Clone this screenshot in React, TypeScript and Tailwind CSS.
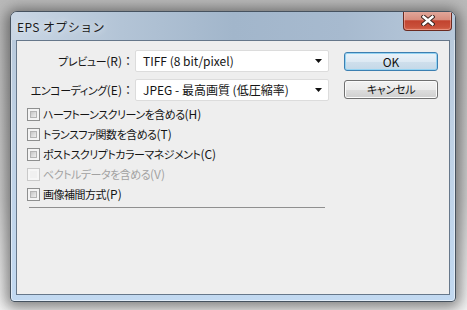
import React from "react";

type Opt = { label: string; key: string; disabled?: boolean };

const options: Opt[] = [
  { label: "ハーフトーンスクリーンを含める", key: "(H)" },
  { label: "トランスファ関数を含める", key: "(T)" },
  { label: "ポストスクリプトカラーマネジメント", key: "(C)" },
  { label: "ベクトルデータを含める", key: "(V)", disabled: true },
  { label: "画像補間方式", key: "(P)" },
];

function Arrow() {
  return (
    <svg width="7" height="4" viewBox="0 0 7 4" className="shrink-0">
      <path d="M0 0h7L3.5 4z" fill="#111" />
    </svg>
  );
}

function Select({ value }: { value: string }) {
  return (
    <div className="flex h-[22px] w-[194px] items-center justify-between rounded-[2px] border border-[#dcdcdc] bg-white pl-[7px] pr-[6px]">
      <span className="whitespace-nowrap">{value}</span>
      <Arrow />
    </div>
  );
}

function CheckBox({ disabled }: { disabled?: boolean }) {
  return (
    <div
      className={
        disabled
          ? "h-[13px] w-[13px] shrink-0 border border-[#c9c9c9] bg-[#f6f6f6] p-[2px]"
          : "h-[13px] w-[13px] shrink-0 border border-[#8e8f8f] bg-[#f4f4f4] p-[2px]"
      }
    >
      <div
        className={
          disabled
            ? "h-full w-full bg-[#f0f0f0]"
            : "h-full w-full border border-[#b4b4b4] bg-[linear-gradient(135deg,#c6c6c6,#eeeeee)]"
        }
      />
    </div>
  );
}

function Label({ text, k }: { text: string; k: string }) {
  return (
    <div className="flex items-center justify-end whitespace-nowrap pr-[1px]">
      <span className="text-[11px] tracking-[-0.4px]">{text}</span>
      <span>{k}</span>
      <span className="[font-feature-settings:normal]">：</span>
    </div>
  );
}

export default function App() {
  return (
    <div className="h-[310px] w-[467px] overflow-hidden bg-[linear-gradient(180deg,#b9b9b9,#cfcfcf_65%,#f3f3f3)] pl-[10px] pt-[11px] font-['Noto_Sans_CJK_JP','Noto_Sans',sans-serif] text-[12px] leading-none text-[#141414] [font-feature-settings:'palt'_1]">
      <div className="flex h-[291px] w-[446px] flex-col overflow-hidden rounded-t-[7px] rounded-b-[4px] border border-[#46525f] bg-[linear-gradient(180deg,#b7c8da,#bfd1e4_40%,#c2d9f1)] shadow-[0_2px_14px_4px_rgba(0,0,0,0.45),inset_0_0_0_1px_rgba(255,255,255,0.5)]">
        {/* title bar */}
        <div className="flex h-[28px] shrink-0 bg-[linear-gradient(90deg,#cad7e5_0%,#b3c4d6_25%,#a2b6cb_50%,#a7bacf_75%,#b8c9db_100%)]">
          <span className="self-center pl-[6px] pt-[2px] text-[12px] tracking-[0.4px] text-[#1b1b1b] [font-feature-settings:normal] [text-shadow:0_0_6px_rgba(255,255,255,0.9)]">
            EPS オプション
          </span>
          <div className="-mt-px ml-auto mr-[3px] flex h-[20px] w-[49px] items-center justify-center rounded-b-[4px] border border-t-0 border-[#6b2a20] bg-[linear-gradient(180deg,#e2a99d_0%,#d88e7f_45%,#c2432f_52%,#c9513b_85%,#d86a50_100%)] shadow-[inset_0_0_0_1px_rgba(255,200,190,0.45)]">
            <svg width="14" height="11" viewBox="0 0 14 11">
              <path d="M2.5 1.8L11.5 9.2M11.5 1.8L2.5 9.2" stroke="#3b2520" strokeWidth="4.4" strokeLinecap="square" />
              <path d="M2.5 1.8L11.5 9.2M11.5 1.8L2.5 9.2" stroke="#ffffff" strokeWidth="2.4" strokeLinecap="square" />
            </svg>
          </div>
        </div>
        {/* body */}
        <div className="flex flex-1 flex-col px-[5px] pb-[6px]">
          <div className="flex-1 border border-[#66778a] bg-[#eeeeee] pt-[9px]">
            <div className="flex">
              <div className="grid grid-cols-[118px_194px] gap-y-[7px]">
                <Label text="プレビュー" k="(R)" />
                <Select value="TIFF (8 bit/pixel)" />
                <Label text="エンコーディング" k="(E)" />
                <Select value="JPEG - 最高画質 (低圧縮率)" />
              </div>
              <div className="ml-[15px] mt-[2px] flex flex-col gap-[9px]">
                <button className="flex h-[19px] w-[94px] items-center justify-center rounded-[3px] border border-[#3c7fb1] bg-[linear-gradient(180deg,#eaf3fa_0%,#dde9f3_50%,#cfdfec_51%,#c4d8e8_100%)] shadow-[inset_0_0_0_1px_#94d3f2] text-[12px] text-[#111]">
                  OK
                </button>
                <button className="flex h-[19px] w-[94px] items-center justify-center rounded-[3px] border border-[#707070] bg-[linear-gradient(180deg,#f2f2f2_0%,#ebebeb_50%,#dddddd_51%,#cfcfcf_100%)] shadow-[inset_0_0_0_1px_#fbfbfb] text-[11px] tracking-[-0.3px] text-[#111]">
                  キャンセル
                </button>
              </div>
            </div>
            <div className="mt-[3px] flex flex-col">
              {options.map((o) => (
                <div
                  key={o.key}
                  className={
                    o.disabled
                      ? "flex h-[20px] items-center whitespace-nowrap pl-[10px] text-[#a2a2a2]"
                      : "flex h-[20px] items-center whitespace-nowrap pl-[10px]"
                  }
                >
                  <CheckBox disabled={o.disabled} />
                  <span className="ml-[3px] text-[11px] tracking-[-0.5px]">{o.label}</span>
                  <span>{o.key}</span>
                </div>
              ))}
            </div>
            <div className="ml-[12px] mt-[3px] w-[296px] border-t border-[#8f8f8f]" />
          </div>
        </div>
      </div>
    </div>
  );
}
